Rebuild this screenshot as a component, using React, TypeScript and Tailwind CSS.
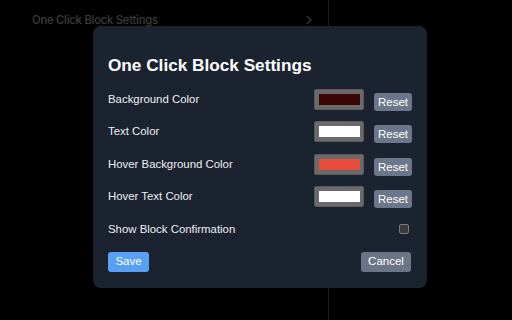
import React from "react";

const rows = [
  { label: "Background Color", color: "#3a0505" },
  { label: "Text Color", color: "#ffffff" },
  { label: "Hover Background Color", color: "#e74c3c" },
  { label: "Hover Text Color", color: "#ffffff" },
];

export default function App() {
  return (
    <div className="relative w-[512px] h-[320px] overflow-hidden bg-black" style={{ fontFamily: "'Liberation Sans', Arial, sans-serif" }}>
      {/* background page */}
      <div className="flex h-full">
        <div className="w-[329px] h-full border-r border-[#1c1c1c] pt-[12px] pl-[32px] pr-[16px]">
          <div className="flex items-center justify-between">
            <span className="text-[11.2px] font-medium text-[#3c3c3c] font-['Inter',sans-serif] tracking-[-0.2px]">One Click Block Settings</span>
            <svg width="6" height="10" viewBox="0 0 6 10" className="mr-0">
              <path d="M1 1l4 4-4 4" stroke="#3a3a3a" strokeWidth="1.2" fill="none" />
            </svg>
          </div>
        </div>
      </div>

      {/* modal */}
      <div className="absolute left-[93px] top-[26px] w-[334px] h-[262px] rounded-[8px] bg-[#1c2330] px-[15px] pt-[29px]">
        <h1 className="text-[17.2px] leading-[20px] font-bold text-white m-0">One Click Block Settings</h1>
        <div className="mt-[14px] flex flex-col gap-[11.3px]">
          {rows.map((r) => (
            <div key={r.label} className="flex items-center justify-between h-[21px]">
              <span className="text-[11.4px] text-[#eef0f3]">{r.label}</span>
              <div className="flex items-end gap-[10px] h-[21px]">
                <div className="w-[50px] h-[21px] rounded-[2px] bg-[#6a6a6a] border border-[#5a5a5a] flex items-center justify-center">
                  <div className="w-[41px] h-[11px]" style={{ backgroundColor: r.color }} />
                </div>
                <button className="h-[18px] w-[38px] mb-[-1px] rounded-[3px] bg-[#6b7789] text-white text-[11.5px] leading-[18px] flex items-center justify-center">
                  Reset
                </button>
              </div>
            </div>
          ))}
        </div>
        <div className="flex items-center justify-between h-[21px] mt-[12px]">
          <span className="text-[11.4px] text-[#eef0f3]">Show Block Confirmation</span>
          <div className="w-[10px] h-[10px] mr-[3px] rounded-[2px] bg-[#3b3b3b] border border-[#7a7a7a]" />
        </div>
        <div className="flex items-center justify-between mt-[12px]">
          <button className="h-[20px] w-[41px] rounded-[3px] bg-[#58a0f3] text-white text-[11.5px] flex items-center justify-center">Save</button>
          <button className="h-[20px] w-[50px] mr-[1px] rounded-[3px] bg-[#6b7585] text-white text-[11.5px] flex items-center justify-center">Cancel</button>
        </div>
      </div>
    </div>
  );
}
